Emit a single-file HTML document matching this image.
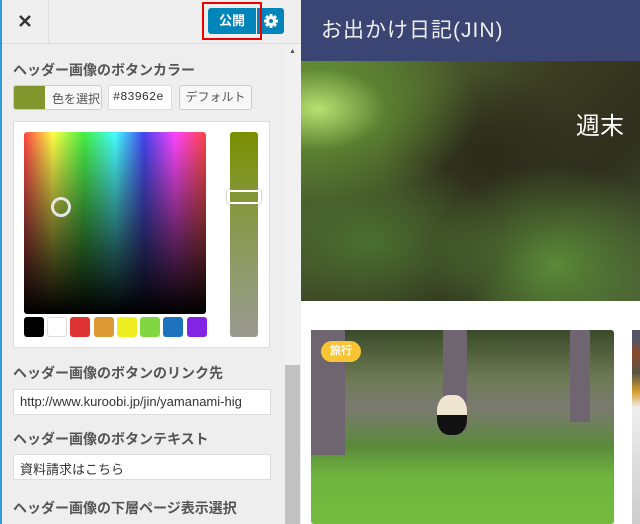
<!DOCTYPE html>
<html><head><meta charset="utf-8"><style>
*{box-sizing:border-box;margin:0;padding:0}
body{width:640px;height:524px;overflow:hidden;position:relative;background:#fff;font-family:"Liberation Sans","Noto Sans CJK JP",sans-serif}
.a{position:absolute}
.lbl{font-size:14px;font-weight:bold;color:#555;position:absolute;left:13px}
.inp{position:absolute;left:13px;width:258px;height:26px;background:#fff;border:1px solid #ddd;font-size:13px;color:#333;padding:4px 6px;white-space:nowrap;overflow:hidden}
</style></head><body>
<div class="a" style="left:0;top:0;width:301px;height:524px;background:#eee;border-left:2px solid #2e9bd6"></div>
<div class="a" style="left:2px;top:0;width:299px;height:44px;background:#eee;border-bottom:1px solid #ddd"></div>
<div class="a" style="left:48px;top:0;width:1px;height:44px;background:#ddd"></div>
<svg class="a" style="left:19px;top:15px" width="12" height="12" viewBox="0 0 12 12"><path d="M1 1L11 11M11 1L1 11" stroke="#333" stroke-width="2.4"/></svg>
<div class="a" style="left:208px;top:8px;width:48px;height:26px;background:#0085ba;border-radius:3px 0 0 3px;color:#fff;font-size:13px;font-weight:bold;text-align:center;line-height:26px">公開</div>
<div class="a" style="left:257px;top:8px;width:27px;height:26px;background:#0085ba;border-radius:0 3px 3px 0"></div>
<svg class="a" style="left:263px;top:13px" width="16" height="16" viewBox="0 0 16 16"><g fill="#fff"><circle cx="8" cy="8" r="5"/><rect x="6.5" y="1" width="3" height="14"/><rect x="1" y="6.5" width="14" height="3"/><rect x="6.5" y="1" width="3" height="14" transform="rotate(45 8 8)"/><rect x="6.5" y="1" width="3" height="14" transform="rotate(-45 8 8)"/></g><circle cx="8" cy="8" r="2" fill="#0085ba"/></svg>
<div class="a" style="left:202px;top:2px;width:60px;height:38px;border:2px solid #e00"></div>
<div class="a" style="left:285px;top:44px;width:16px;height:480px;background:#f1f1f1"></div>
<div class="a" style="left:285px;top:365px;width:15px;height:159px;background:#c1c1c1"></div>
<div class="a" style="left:289px;top:48px;font-size:7px;color:#555">▲</div>

<div class="lbl" style="top:60px">ヘッダー画像のボタンカラー</div>
<div class="a" style="left:13px;top:85px;width:89px;height:25px;border:1px solid #ccc;border-radius:3px;background:#f7f7f7;overflow:hidden">
<div class="a" style="left:0;top:0;width:31px;height:24px;background:#83962e"></div>
<div class="a" style="left:38px;top:4px;font-size:12px;color:#555">色を選択</div></div>
<div class="a" style="left:108px;top:85px;width:64px;height:25px;background:#fff;border:1px solid #ddd;font-family:'Liberation Mono',monospace;font-size:12px;padding:4px 4px;color:#333">#83962e</div>
<div class="a" style="left:179px;top:85px;width:73px;height:25px;border:1px solid #ccc;border-radius:3px;background:#f7f7f7;font-size:12px;color:#555;text-align:center;line-height:23px">デフォルト</div>

<div class="a" style="left:13px;top:121px;width:257px;height:227px;background:#fff;border:1px solid #ddd"></div>
<div class="a" style="left:24px;top:132px;width:182px;height:182px;border-radius:3px;background:linear-gradient(to bottom,rgba(0,0,0,0),#000),linear-gradient(to bottom,rgba(128,128,128,0),rgba(128,128,128,0.3)),linear-gradient(to right,#f44,#ff4 16%,#4e4 33%,#4ff 50%,#44e 66%,#f4f 83%,#f44)"></div>
<div class="a" style="left:51px;top:197px;width:20px;height:20px;border:3px solid #e6e6e6;border-radius:50%"></div>
<div class="a" style="left:230px;top:132px;width:28px;height:205px;border-radius:3px;background:linear-gradient(#7a9000,#8a9a55 50%,#999990)"></div>
<div class="a" style="left:227px;top:190px;width:34px;height:14px;border:2px solid #fff;border-radius:3px;box-shadow:0 0 2px #888"></div>
<div class="a" style="left:24px;top:317px;width:20px;height:20px;border-radius:3px;background:#000"></div>
<div class="a" style="left:47px;top:317px;width:20px;height:20px;border-radius:3px;background:#fff;border:1px solid #ddd"></div>
<div class="a" style="left:70px;top:317px;width:20px;height:20px;border-radius:3px;background:#dd3333"></div>
<div class="a" style="left:94px;top:317px;width:20px;height:20px;border-radius:3px;background:#dd9933"></div>
<div class="a" style="left:117px;top:317px;width:20px;height:20px;border-radius:3px;background:#eeee22"></div>
<div class="a" style="left:140px;top:317px;width:20px;height:20px;border-radius:3px;background:#81d742"></div>
<div class="a" style="left:163px;top:317px;width:20px;height:20px;border-radius:3px;background:#1e73be"></div>
<div class="a" style="left:187px;top:317px;width:20px;height:20px;border-radius:3px;background:#8224e3"></div>

<div class="lbl" style="top:363px">ヘッダー画像のボタンのリンク先</div>
<div class="inp" style="top:389px">http://www.kuroobi.jp/jin/yamanami-hig</div>
<div class="lbl" style="top:429px">ヘッダー画像のボタンテキスト</div>
<div class="inp" style="top:454px">資料請求はこちら</div>
<div class="lbl" style="top:498px">ヘッダー画像の下層ページ表示選択</div>

<div class="a" style="left:301px;top:0;width:339px;height:62px;background:#3b4574"></div>
<div class="a" style="left:321px;top:14px;font-size:21px;color:#eee;letter-spacing:1px">お出かけ日記(JIN)</div>
<div class="a" style="left:301px;top:61px;width:339px;height:240px;background:radial-gradient(ellipse at 5% 20%,#b8e070 0,rgba(100,150,50,0.6) 15%,transparent 35%),radial-gradient(ellipse at 75% 85%,#5a8a38 0,transparent 35%),radial-gradient(ellipse at 20% 75%,#4a7030 0,transparent 35%),radial-gradient(ellipse at 55% 40%,#2a2a1a 0,transparent 40%),linear-gradient(135deg,#5d7a3a,#3a3d22 45%,#2e2f1e 70%,#4a5a35)"></div>
<div class="a" style="left:576px;top:106px;font-size:24px;color:#fff">週末</div>
<div class="a" style="left:311px;top:330px;width:303px;height:194px;border-radius:3px;background:linear-gradient(to bottom,#3a4a28 0,#6d7a55 25%,#7a7a70 40%,#5b8a3a 60%,#6fb43e 75%,#74bb3e 100%)"></div>
<div class="a" style="left:311px;top:330px;width:34px;height:125px;background:#6e6570"></div>
<div class="a" style="left:443px;top:330px;width:24px;height:100px;background:#6e6570"></div>
<div class="a" style="left:570px;top:330px;width:20px;height:92px;background:#6e6570"></div>
<div class="a" style="left:437px;top:395px;width:30px;height:40px;border-radius:40%;background:linear-gradient(#efe5d0 50%,#111 50%)"></div>
<div class="a" style="left:321px;top:341px;width:40px;height:21px;border-radius:11px;background:#f9c535;color:#fff;font-size:11px;font-weight:bold;text-align:center;line-height:21px">旅行</div>
<div class="a" style="left:632px;top:330px;width:8px;height:194px;background:linear-gradient(#556 5%,#8a4a2a 12%,#554 22%,#d9a030 32%,#eee 40%,#ccc)"></div>
</body></html>
